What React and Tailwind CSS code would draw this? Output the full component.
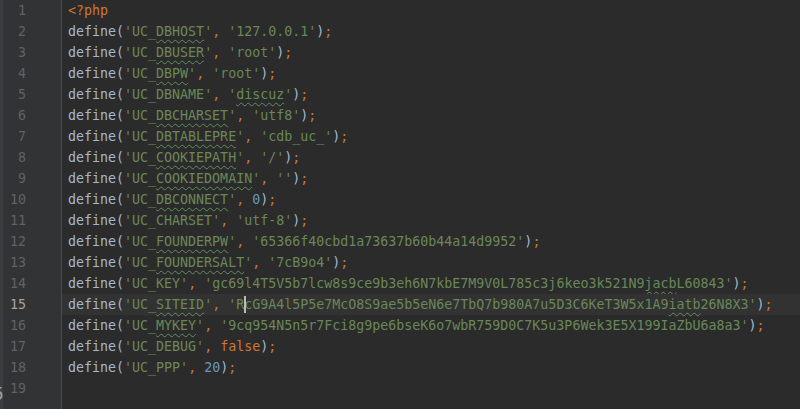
import React from "react";

const C = {
  plain: "text-[#a3b8cf]",
  str: "text-[#6a8759]",
  op: "text-[#cc7832]",
  num: "text-[#6897bb]",
};

const Typo = ({ children }) => (
  <span className="underline decoration-wavy decoration-[#5f8f5f] decoration-1 underline-offset-[3px]">
    {children}
  </span>
);

// one define('UC_X', value); line
const Define = ({ name, typo, value }) => (
  <>
    <span className={C.plain}>define(</span>
    <span className={C.str}>
      'UC_{typo ? <Typo>{name}</Typo> : name}'
    </span>
    <span className={C.op}>, </span>
    {value}
    <span className={C.plain}>)</span>
    <span className={C.op}>;</span>
  </>
);

const S = ({ children }) => <span className={C.str}>{children}</span>;

const lines = [
  <span className={C.op}>&lt;?php</span>,
  <Define name="DBHOST" typo value={<S>'127.0.0.1'</S>} />,
  <Define name="DBUSER" typo value={<S>'root'</S>} />,
  <Define name="DBPW" typo value={<S>'root'</S>} />,
  <Define name="DBNAME" value={<S>'<Typo>discuz</Typo>'</S>} />,
  <Define name="DBCHARSET" typo value={<S>'utf8'</S>} />,
  <Define name="DBTABLEPRE" typo value={<S>'cdb_uc_'</S>} />,
  <Define name="COOKIEPATH" typo value={<S>'/'</S>} />,
  <Define name="COOKIEDOMAIN" typo value={<S>''</S>} />,
  <Define name="DBCONNECT" typo value={<span className={C.num}>0</span>} />,
  <Define name="CHARSET" value={<S>'utf-8'</S>} />,
  <Define name="FOUNDERPW" typo value={<S>'65366f40cbd1a73637b60b44a14d9952'</S>} />,
  <Define name="FOUNDERSALT" typo value={<S>'7cB9o4'</S>} />,
  <Define
    name="KEY"
    value={<S>'gc69l4T5V5b7lcw8s9ce9b3eh6N7kbE7M9V0L785c3j6keo3k521N9<Typo>jacb</Typo>L60843'</S>}
  />,
  <Define
    name="SITEID"
    typo
    value={<S>'RcG9A4l5P5e7McO8S9ae5b5eN6e7TbQ7b980A7u5D3C6KeT3W5x1A9<Typo>iatb</Typo>26N8X3'</S>}
  />,
  <Define
    name="MYKEY"
    typo
    value={<S>'9cq954N5n5r7Fci8g9pe6bseK6o7wbR759D0C7K5u3P6Wek3E5X199IaZbU6a8a3'</S>}
  />,
  <Define name="DEBUG" value={<span className={C.op}>false</span>} />,
  <Define name="PPP" value={<span className={C.num}>20</span>} />,
  null,
];

const CURRENT = 15;

export default function App() {
  return (
    <div className="flex h-[409px] w-[800px] overflow-hidden bg-[#2b2b2b] font-['DejaVu_Sans_Mono',monospace] text-[13.3px] leading-[21px]">
      {/* gutter */}
      <div className="relative flex w-[62px] shrink-0 bg-[#313335] border-r border-[#4b4b4b]">
        <div className="relative w-[3px] shrink-0 overflow-hidden bg-[#3b3e40]">
          <span className="absolute left-[-7px] top-[384px] font-['DejaVu_Sans',sans-serif] text-[17px] leading-[20px] text-[#9ea3a8]">
            5
          </span>
        </div>
        <div className="w-[23px] shrink-0 text-right">
          {lines.map((_, i) => (
            <div
              key={i}
              className={`h-[21px] ${i + 1 === CURRENT ? "text-[#a4a3a3]" : "text-[#606366]"}`}
            >
              {i + 1}
            </div>
          ))}
        </div>
      </div>

      {/* editor */}
      <div className="flex-1 whitespace-pre">
        {lines.map((content, i) => (
          <div
            key={i}
            className={`relative h-[21px] pl-[6px] ${i + 1 === CURRENT ? "bg-[#323232]" : ""}`}
          >
            {content}
            {i + 1 === CURRENT && (
              <span className="absolute left-[182px] top-[2px] h-[17px] w-[2px] bg-[#bbbbbb]" />
            )}
          </div>
        ))}
      </div>
    </div>
  );
}
